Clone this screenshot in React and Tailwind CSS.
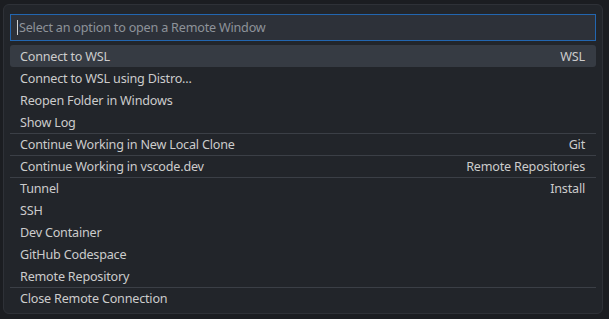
import React from "react";

const rows = [
  { label: "Connect to WSL", right: "WSL", selected: true },
  { label: "Connect to WSL using Distro..." },
  { label: "Reopen Folder in Windows" },
  { label: "Show Log" },
  { label: "Continue Working in New Local Clone", right: "Git", sep: true },
  { label: "Continue Working in vscode.dev", right: "Remote Repositories", sep: true },
  { label: "Tunnel", right: "Install", sep: true },
  { label: "SSH" },
  { label: "Dev Container" },
  { label: "GitHub Codespace" },
  { label: "Remote Repository" },
  { label: "Close Remote Connection", sep: true },
];

export default function App() {
  return (
    <div
      className="w-[609px] h-[319px] bg-[#1b1d21] pl-[3px] pt-[4px] overflow-hidden"
      style={{ fontFamily: '"Noto Sans", "Open Sans", sans-serif' }}
    >
      <div className="w-[600px] h-[310px] bg-[#22252a] border border-[#2e3137] rounded-[6px] px-[6px] pt-[9px]">
        <div className="h-[27px] bg-[#2d3139] border border-[#2266b0] flex items-center pl-[6px] pt-[2px]">
          <span className="w-px h-[15px] bg-[#d0d0d0] mr-px -mt-[2px]" />
          <span className="text-[12.6px] tracking-[-0.2px] text-[#8e939a] leading-none">
            Select an option to open a Remote Window
          </span>
        </div>
        <div className="mt-[4px] flex flex-col">
          {rows.map((r, i) => (
            <div
              key={i}
              className={
                "h-[22px] flex items-center justify-between pl-[10px] pr-[11px] pt-[2px] text-[12.6px] tracking-[-0.2px] text-[#cccccc] leading-none " +
                (r.sep ? "border-t border-[#3b3f46] " : "") +
                (r.selected ? "bg-[#363b43] rounded-[3px]" : "")
              }
            >
              <span>{r.label}</span>
              {r.right ? <span>{r.right}</span> : null}
            </div>
          ))}
        </div>
      </div>
    </div>
  );
}
